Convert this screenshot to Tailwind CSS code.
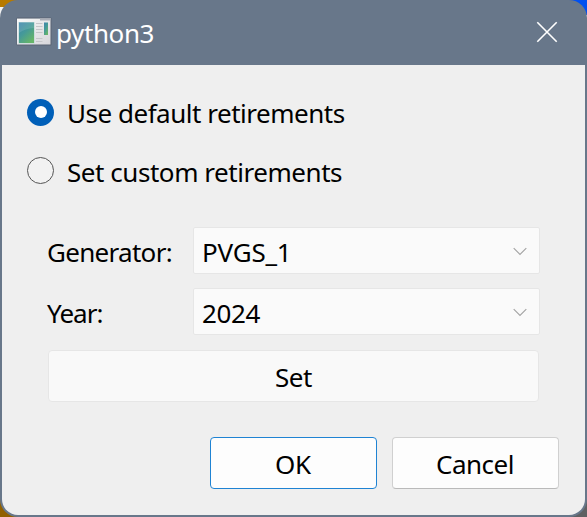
<!DOCTYPE html>
<html lang="en">
<head>
<meta charset="utf-8">
<title>python3</title>
<script src="https://cdn.jsdelivr.net/npm/@tailwindcss/browser@4"></script>
</head>
<body class="relative h-[517px] w-[587px] overflow-hidden bg-[#f3f3f3] font-['Noto_Sans','Open_Sans',sans-serif] text-[26px] leading-[36px] text-black">
<!-- desktop showing behind the window corners -->
<div class="absolute left-0 top-0 h-[7px] w-6 bg-[#b67a00]"></div>
<div class="absolute right-0 top-0 h-[15px] w-6 bg-[#0050f0]"></div>
<div class="absolute bottom-0 left-0 h-6 w-6 bg-[#906000]"></div>
<div class="absolute bottom-0 right-0 h-6 w-6 bg-[#5f6062]"></div>

<main class="relative flex h-[517px] w-[587px] flex-col overflow-hidden rounded-[18px] bg-[#68778a] px-[2px] pb-[2px]">
  <header class="flex h-[65px] shrink-0 items-start pl-[14px] pr-[27px]">
    <svg class="mt-[17px] h-[29px] w-[36px] shrink-0" viewBox="0 0 36 29">
      <defs>
        <linearGradient id="pane" x1="0" y1="0" x2=".7" y2="1"><stop offset="0" stop-color="#3c84ae"/><stop offset=".5" stop-color="#459a98"/><stop offset="1" stop-color="#66b568"/></linearGradient>
        <linearGradient id="frame" x1="0" y1="0" x2="1" y2="1"><stop offset="0" stop-color="#fafafa"/><stop offset="1" stop-color="#d6d6da"/></linearGradient>
      </defs>
      <rect x=".5" y=".5" width="35" height="28" rx="1" fill="#586373"/>
      <rect x="1" y="1" width="33.500" height="26.500" fill="url(#frame)"/>
      <path d="M1 1.500H34.500" stroke="#9ca3ac"/>
      <path d="M24 2.500H34" stroke="#a9adb7" stroke-width="2"/>
      <rect x="2.500" y="5" width="16" height="21.500" fill="#b7d6d4"/>
      <rect x="3" y="5.500" width="15" height="20.500" fill="url(#pane)"/>
      <path d="M3 5.500H18V11Q9 11.500 3 16Z" fill="#fff" opacity=".12"/>
      <path d="M20 6.500h6.500M20 9.500h6.500M20 12.500h6.500M20 15.500h6.500M20 21.500h6.500M20 24.500h6.500" stroke="#c5c6c9" stroke-width="1"/>
      <rect x="28" y="5.500" width="4" height="12.500" fill="url(#pane)"/>
    </svg>
    <h1 class="ml-[4px] mt-[15px] whitespace-nowrap font-normal text-white"><span class="tracking-[-0.4px]">python3</span></h1>
    <svg class="ml-auto mt-[21px] h-[22px] w-[22px]" viewBox="0 0 22 22" fill="none" stroke="#fff" stroke-width="1.600"><path d="M1.300 1.300L20.700 20.700M20.700 1.300L1.300 20.700"/></svg>
  </header>

  <section class="flex min-h-0 grow flex-col rounded-b-[16px] bg-[#efefef] pl-[25px] pr-[26px] pt-[29px]">
    <label class="flex h-[36px] items-center">
      <span class="flex size-[27px] items-center justify-center rounded-full bg-[#005fb8]"><span class="size-[12px] rounded-full bg-white"></span></span>
      <span class="ml-[13px] mt-[1px] whitespace-nowrap tracking-[-0.48px]">Use default retirements</span>
    </label>
    <label class="mt-[22px] flex h-[36px] items-center">
      <span class="size-[27px] rounded-full border border-[#555555] bg-[#f2f2f2]"></span>
      <span class="ml-[13px] mt-[3px] whitespace-nowrap tracking-[-0.45px]">Set custom retirements</span>
    </label>

    <div class="ml-[20px] mr-[19px] mt-[39px] grid grid-cols-[146px_347px] gap-y-[14px]">
      <span class="pt-[7px] whitespace-nowrap"><span class="tracking-[-0.7px]">Generator:</span></span>
      <div class="flex h-[47px] items-start justify-between rounded-[2px] border border-[#e6e6e6] bg-[#fafafa] pl-[8px] pr-[12px]">
        <span class="mt-[6px] tracking-[-0.2px]">PVGS_1</span>
        <svg class="mt-[19px] h-[9px] w-[14px]" viewBox="0 0 14 9" fill="none" stroke="#a5a5a5" stroke-width="1.200"><path d="M.7 1.200L7 7.500L13.300 1.200"/></svg>
      </div>
      <span class="pt-[7px] whitespace-nowrap"><span class="tracking-[-1px]">Year:</span></span>
      <div class="flex h-[47px] items-start justify-between rounded-[2px] border border-[#e6e6e6] bg-[#fafafa] pl-[8px] pr-[12px]">
        <span class="mt-[6px] tracking-[-0.4px]">2024</span>
        <svg class="mt-[19px] h-[9px] w-[14px]" viewBox="0 0 14 9" fill="none" stroke="#a5a5a5" stroke-width="1.200"><path d="M.7 1.200L7 7.500L13.300 1.200"/></svg>
      </div>
    </div>
    <button class="ml-[21px] mt-[15px] flex h-[52px] w-[491px] shrink-0 items-start justify-center rounded-[4px] border border-[#e6e6e6] bg-[#f9f9f9] pt-[8px]"><span class="tracking-[-0.4px]">Set</span></button>
    <div class="mt-[35px] flex justify-end gap-[15px]">
      <button class="flex h-[52px] w-[167px] items-start justify-center rounded-[4px] border border-[#1f83d3] bg-[#fdfdfd] pr-[1px] pt-[8px]"><span class="tracking-[-0.3px]">OK</span></button>
      <button class="flex h-[52px] w-[167px] items-start justify-center rounded-[4px] border border-[#d0d0d0] border-b-[#bababa] bg-[#fdfdfd] pr-[1px] pt-[8px]"><span class="tracking-[-0.5px]">Cancel</span></button>
    </div>
  </section>
</main>
</body>
</html>
